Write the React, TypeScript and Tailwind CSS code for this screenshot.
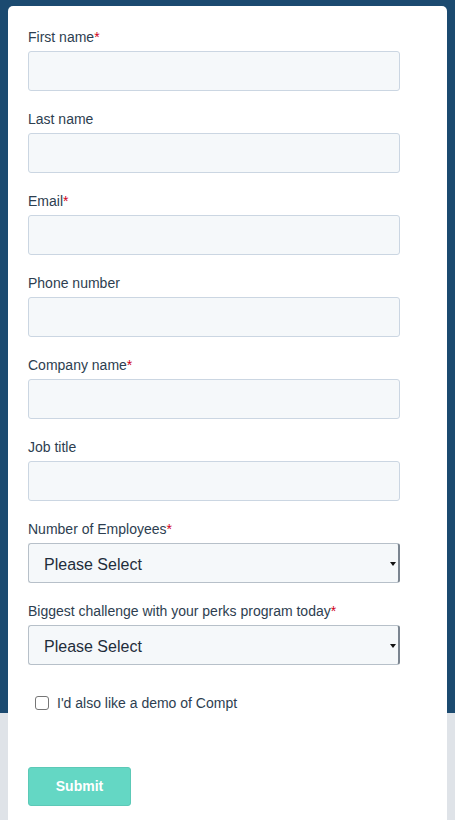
const fields = [
  { label: 'First name', required: true },
  { label: 'Last name', required: false },
  { label: 'Email', required: true },
  { label: 'Phone number', required: false },
  { label: 'Company name', required: true },
  { label: 'Job title', required: false },
]

const selects = [
  { label: 'Number of Employees', required: true },
  { label: 'Biggest challenge with your perks program today', required: true },
]

function Label({ text, required }: { text: string; required: boolean }) {
  return (
    <label className="block h-5 leading-5 text-[14px] text-[#2d3e50] mb-[5px] pt-px">
      {text}
      {required && <span className="text-[#d0021b]">*</span>}
    </label>
  )
}

function SelectBox() {
  return (
    <div className="relative h-10 w-[372px] rounded-[3px] border border-[#b7c0c9] border-r-[2px] border-r-[#7b8590] bg-[#f5f8fa] flex items-center pl-[15px] pt-[3px]">
      <span className="text-[16px] text-[#1f2d3b]">Please Select</span>
      {/* tiny native-ish arrow */}
      <span className="absolute right-[2px] top-[18px] w-0 h-0 border-l-[3px] border-r-[3px] border-t-[4px] border-l-transparent border-r-transparent border-t-[#111]" />
    </div>
  )
}

export default function App() {
  return (
    <div
      className="w-[455px] h-[820px] overflow-hidden bg-[linear-gradient(to_bottom,#1b4a70_713px,#dfe3e8_713px)] pt-[6px] px-2"
      style={{ fontFamily: '"Liberation Sans", Arial, sans-serif' }}
    >
      <div className="h-[900px] bg-white rounded-t-[5px] pl-5 pt-5">
        {fields.map((f) => (
          <div key={f.label} className="mb-[17px]">
            <Label text={f.label} required={f.required} />
            <div className="h-10 w-[372px] rounded-[3px] border border-[#cbd6e2] bg-[#f5f8fa]" />
          </div>
        ))}

        {selects.map((s) => (
          <div key={s.label} className="mb-[17px]">
            <Label text={s.label} required={s.required} />
            <SelectBox />
          </div>
        ))}

        <div className="flex items-center gap-2 pl-[7px] pt-[15px] h-[27px]">
          <span className="w-[14px] h-[14px] rounded-[3px] border border-[#767676] bg-white" />
          <span className="text-[14px] text-[#2d3e50]">I'd also like a demo of Compt</span>
        </div>

        <button className="mt-[58px] w-[103px] h-[39px] rounded-[3px] border border-[#5cc9b7] bg-[#64d7c4] text-white font-bold text-[14px]">
          Submit
        </button>
      </div>
    </div>
  )
}
